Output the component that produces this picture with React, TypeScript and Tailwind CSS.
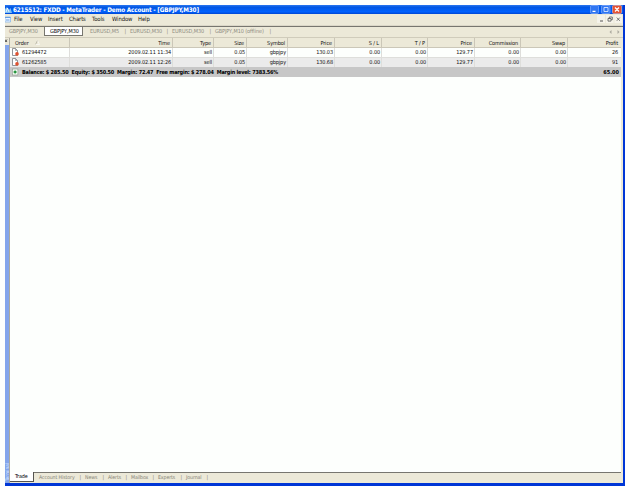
import React from "react";
import clsx from "clsx";

const columns = [
  { title: "Time", width: "w-[103px]" },
  { title: "Type", width: "w-[41px]" },
  { title: "Size", width: "w-[33px]" },
  { title: "Symbol", width: "w-[41px]" },
  { title: "Price", width: "w-[47px]" },
  { title: "S / L", width: "w-[47px]" },
  { title: "T / P", width: "w-[46px]" },
  { title: "Price", width: "w-[47px]" },
  { title: "Commission", width: "w-[46px]" },
  { title: "Swap", width: "w-[47px]" },
  { title: "Profit", width: "w-[53px]" },
];

const orders = [
  {
    id: "61294472",
    cells: ["2009.02.11 11:34", "sell", "0.05", "gbpjpy", "130.03", "0.00", "0.00", "129.77", "0.00", "0.00", "26"],
  },
  {
    id: "61262585",
    cells: ["2009.02.11 12:26", "sell", "0.05", "gbpjpy", "130.68", "0.00", "0.00", "129.77", "0.00", "0.00", "91"],
  },
];

const menus = [
  { label: "File", width: "w-[16px]" },
  { label: "View", width: "w-[18px]" },
  { label: "Insert", width: "w-[21px]" },
  { label: "Charts", width: "w-[23px]" },
  { label: "Tools", width: "w-[20px]" },
  { label: "Window", width: "w-[26px]" },
  { label: "Help", width: "w-[16px]" },
];

const chartTabs = [
  { label: "EURUSD,M5", width: "w-[40px]" },
  { label: "EURUSD,M30", width: "w-[42px]" },
  { label: "EURUSD,M30", width: "w-[43px]" },
  { label: "GBPJPY,M10 (offline)", width: "w-[60px]" },
];

const terminalTabs = [
  { label: "Account History", width: "w-[46px]" },
  { label: "News", width: "w-[23px]" },
  { label: "Alerts", width: "w-[23px]" },
  { label: "Mailbox", width: "w-[27px]" },
  { label: "Experts", width: "w-[28px]" },
  { label: "Journal", width: "w-[26px]" },
];

function OrderIcon() {
  return (
    <svg className="shrink-0" width="8" height="8" viewBox="0 0 8 8">
      <path d="M1.5.5h3l2 2v5h-5z" fill="#fff" stroke="#777b82" strokeWidth=".8" />
      <path d="M4.5.5v2h2" fill="none" stroke="#777b82" strokeWidth=".6" />
      <circle cx="6" cy="5.9" r="1.8" fill="#df512f" />
    </svg>
  );
}

function BalanceIcon() {
  return (
    <svg className="shrink-0" width="8" height="8" viewBox="0 0 8 8">
      <rect x="1.3" y="1" width="5.6" height="6" fill="#f5fff5" stroke="#8a958a" strokeWidth=".6" />
      <path d="M2.6 4h3M4.1 2.5v3" stroke="#168c31" strokeWidth="1.3" />
    </svg>
  );
}

function TitleBar() {
  return (
    <div className="flex h-[9px] shrink-0 items-center bg-[linear-gradient(#2b78ef,#0056e4_25%,#0062ff_75%,#0046d2)] text-white">
      <svg className="shrink-0" width="8" height="9" viewBox="0 0 8 9">
        <path d="M0 8V4l2-2 2 3 1.5-2L7 8z" fill="#7cc0f4" />
        <path d="M1 7l1.5-4L4 7" stroke="#fff" strokeWidth=".8" fill="none" />
      </svg>
      <span className="whitespace-nowrap text-[6.3px] font-bold leading-[8px] tracking-[-0.15px]">
        6215512: FXDD - MetaTrader - Demo Account - [GBPJPY,M30]
      </span>
      <svg className="ml-auto mr-px" width="34" height="9" viewBox="0 0 34 9">
        <rect x="2.5" y=".5" width="8" height="8" rx="1" fill="#3077f2" stroke="#91b7ff" strokeWidth=".6" />
        <rect x="13.5" y=".5" width="8.5" height="8" rx="1" fill="#3077f2" stroke="#91b7ff" strokeWidth=".6" />
        <rect x="24.5" y=".5" width="9" height="8" rx="1" fill="#e65331" stroke="#f5b4a5" strokeWidth=".6" />
        <path d="M4.5 6.3h3M27 2.5l4 4M31 2.5l-4 4" stroke="#fff" strokeWidth="1.2" />
        <path d="M16 2.5h4v4h-4z" fill="none" stroke="#d6e4ff" strokeWidth=".9" />
      </svg>
    </div>
  );
}

function MenuBar() {
  return (
    <div className="flex h-[12px] shrink-0 items-center border-b border-[#dbd7c8] bg-[#ece9d8] text-[5.9px] leading-[9px] text-[#151510]">
      <svg className="shrink-0" width="9" height="9" viewBox="0 0 9 9">
        <path d="M0 2h5.5v5H0z" fill="#edf6ff" stroke="#8bb8ea" strokeWidth=".8" />
        <path d="M0 2.5h5.5M1 5h3.5" stroke="#5a96e2" strokeWidth=".9" />
      </svg>
      {menus.map((menu) => (
        <span key={menu.label} className={clsx("whitespace-nowrap", menu.width)}>
          {menu.label}
        </span>
      ))}
      <svg className="ml-auto mr-px" width="25" height="9" viewBox="0 0 25 9">
        <path d="M0 0h8v8H0zM9 0h7.5v8H9zM17.5 0H25v8h-7.5z" fill="#f5f3ea" />
        <path d="M3 6h3" stroke="#555" />
        <path d="M11 3.5h3v2.6h-3zM12.3 3.5V2h3v2.7H14M19.8 2.6l3 3.2M22.8 2.6l-3 3.2" fill="none" stroke="#555" strokeWidth=".8" />
      </svg>
    </div>
  );
}

function ChartTabs() {
  return (
    <div className="flex h-[11px] shrink-0 border-t border-[#77766f] bg-[#ece9d8] text-[5.5px] leading-[8px] text-[#8d8b80]">
      <span className="w-[39px] pl-[4px]">GBPJPY,M30</span>
      <div className="h-[9px] w-[39px] border-x border-b border-[#77766f] bg-white pl-[5px] text-black">
        GBPJPY,M30
      </div>
      <div className="flex pl-[7px]">
        {chartTabs.map((tab, i) => (
          <span key={i} className={clsx("flex justify-between whitespace-nowrap", tab.width)}>
            <span>{tab.label}</span>
            <span className="mr-[4px]">|</span>
          </span>
        ))}
      </div>
      <svg className="ml-auto mr-[2px] mt-[2px]" width="12" height="6" viewBox="0 0 12 6">
        <path d="M2.5 1l-2 2 2 2zM8.5 1l2 2-2 2z" fill="#aaa89d" />
      </svg>
    </div>
  );
}

function OrderTable() {
  return (
    <div className="min-h-0 flex-1 bg-[#fdfffd]">
      <div className="flex h-[10px] border-b border-[#cbc7b8] bg-[#ece9d8] leading-[10px]">
        <div className="flex w-[60px] shrink-0 items-center border-r border-[#cbc7b8] pl-[5px]">
          Order
          <svg className="ml-[6px]" width="5" height="5" viewBox="0 0 5 5">
            <path d="M.5 4.5l2-4" stroke="#aaa899" strokeWidth=".7" />
            <path d="M2.5.5l2 4h-4" fill="none" stroke="#fff" strokeWidth=".6" />
          </svg>
        </div>
        {columns.map((col, i) => (
          <div
            key={i}
            className={clsx(
              "shrink-0 whitespace-nowrap text-right",
              col.width,
              i < 10 ? "border-r border-[#cbc7b8] pr-[2px]" : "pr-[3px]"
            )}
          >
            {col.title}
          </div>
        ))}
      </div>
      {orders.map((order, row) => (
        <div
          key={order.id}
          className={clsx("flex leading-[9px]", row === 1 ? "h-[9px] bg-[#ebebeb]" : "h-[10px] border-b border-[#dededb]")}
        >
          <div className="flex w-[60px] shrink-0 border-r border-[#dededb] pl-px">
            <OrderIcon />
            <span className="ml-[3px]">{order.id}</span>
          </div>
          {order.cells.map((cell, i) => (
            <div
              key={i}
              className={clsx(
                "shrink-0 whitespace-nowrap text-right",
                columns[i].width,
                i < 10 ? "border-r border-[#dededb] pr-px" : "pr-[3px]"
              )}
            >
              {cell}
            </div>
          ))}
        </div>
      ))}
      <div className="flex h-[10px] items-center bg-[#c7c7c7] pl-px pr-[2px] text-[5.5px] font-bold tracking-[-0.2px] text-black">
        <BalanceIcon />
        <span className="ml-[3px] whitespace-pre">
          Balance: $ 285.50  Equity: $ 350.50  Margin: 72.47  Free margin: $ 278.04  Margin level: 7383.56%
        </span>
        <span className="ml-auto tracking-normal">65.00</span>
      </div>
    </div>
  );
}

function TerminalTabs() {
  return (
    <div className="flex h-[11px] shrink-0 bg-[#ece9d8] text-[5.2px] leading-[9px] text-[#858377]">
      <div className="h-[10px] w-[24px] border-b border-r border-[#55544f] bg-white pl-[5px] text-[5.4px] text-black">Trade</div>
      <div className="flex flex-1 border-t border-[#77766f] pl-[5px] leading-[8px]">
        {terminalTabs.map((tab) => (
          <span key={tab.label} className={clsx("flex justify-between whitespace-nowrap", tab.width)}>
            <span>{tab.label}</span>
            <span className="mr-[4px]">|</span>
          </span>
        ))}
      </div>
    </div>
  );
}

export default function App() {
  return (
    <div className="h-[486px] w-[625px] overflow-hidden bg-[#fdfffd] pl-[5px] pt-[5px] font-['DejaVu_Sans_Condensed','DejaVu_Sans',sans-serif] text-[5.5px] tracking-[-0.09px] text-[#111]">
      <div className="flex h-[481px] flex-col border-b-[3px] border-r-[2px] border-[#0036d6]">
        <TitleBar />
        <MenuBar />
        <ChartTabs />
        <div className="flex min-h-0 flex-1 border-t border-[#d0ccbb] bg-[#ece9d8] pr-[2px]">
          <div className="flex w-[4px] shrink-0 flex-col">
            <svg width="4" height="7" viewBox="0 0 4 7">
              <path d="M0 1.5l2 2.5M2 1.5L0 4" stroke="#333" strokeWidth=".8" />
            </svg>
            <div className="flex flex-1 items-end overflow-hidden bg-[#83a5eb] pb-[2px]">
              <span className="rotate-180 text-[5px] leading-[4px] text-[#dbe6ff] [writing-mode:vertical-rl]">Terminal</span>
            </div>
          </div>
          <div className="flex min-w-0 flex-1 flex-col overflow-hidden border-l border-[#aaa99f]">
            <OrderTable />
            <TerminalTabs />
          </div>
        </div>
      </div>
    </div>
  );
}
